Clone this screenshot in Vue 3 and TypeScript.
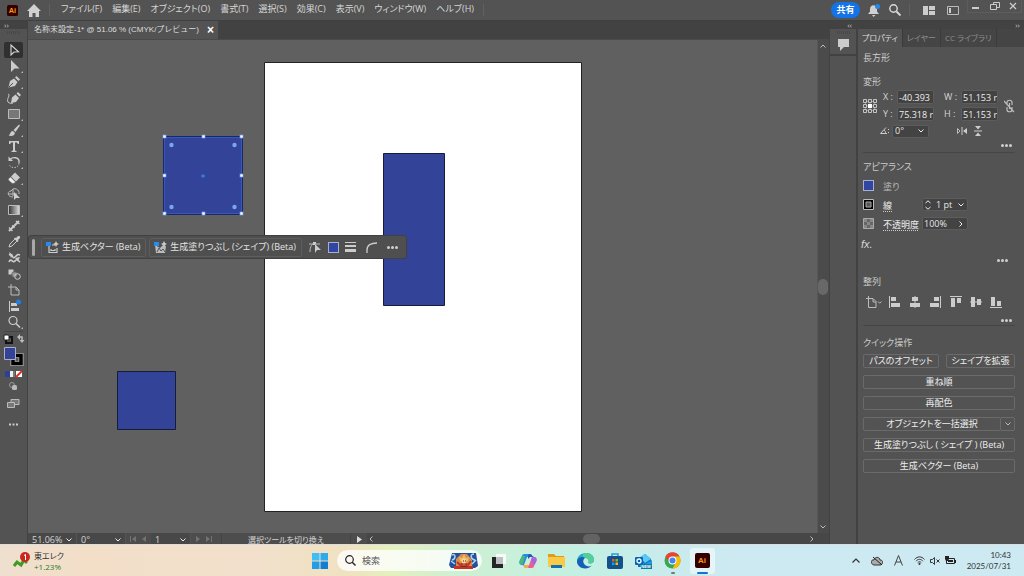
<script setup lang="ts">
import { ref } from 'vue'

interface Tool { name: string; art: string; more?: boolean }

const menus = ['ファイル(F)', '編集(E)', 'オブジェクト(O)', '書式(T)', '選択(S)', '効果(C)', '表示(V)', 'ウィンドウ(W)', 'ヘルプ(H)']

const tools: Tool[] = [
  { name: '選択ツール', art: '<path d="M4 2v10l3-3 4.500-.2z" fill="none" stroke="#d8d8d8" stroke-width="1.100"/>' },
  { name: 'ダイレクト選択ツール', more: true, art: '<path d="M4 1v12l3.500-3.500h5z"/>' },
  { name: 'ペンツール', more: true, art: '<path d="M1.500 12.500l1.500-6.500L7 3.500 10.500 7 8 11zM8 2.500l1.500-1.500L13 4.500 11.500 6z"/><path d="M2 12L6 8" stroke="#535353"/>' },
  { name: '曲線ツール', art: '<path d="M4 12L5 6.500 8.500 3.500l3.500 3.500-3 4zM9.500 2.500L11 1l3 3-1.500 1.500z"/><path d="M1 3c3 1-2 5 0 8 1 1.500 4 1.500 5 1" fill="none" stroke="#ccc"/>' },
  { name: '長方形ツール', more: true, art: '<path d="M1.500 2.500h11v9h-11z" fill="#777" stroke="#bbb"/>' },
  { name: 'ブラシツール', more: true, art: '<path d="M6.500 7L12 1.500l1 1L8.500 9zM6 8l2 2c-.5 2.500-3 3.500-6.500 2.500C3.500 11.500 3 8 6 8z"/>' },
  { name: '文字ツール', more: true, art: '<path d="M2 2h10v3h-1.200L10 3.500H8v8l1.500.5v1h-5v-1l1.500-.5v-8H4L3.200 5H2z"/>' },
  { name: '回転ツール', more: true, art: '<path d="M3 5c2-4 10-3 9 3" fill="none" stroke="#ccc" stroke-width="1.300"/><path d="M12 8c0 6-9 6-10 1" fill="none" stroke="#bbb" stroke-dasharray="1.500 1.300"/><path d="M1.500 1.500V6H6z"/>' },
  { name: '消しゴムツール', more: true, art: '<path d="M8 1.500L13 6.500 9 10.500 4 5.500z"/><path d="M3.500 6L8.500 11 7 12.300H5L1.500 9V8z" fill="#eee" stroke="#777" stroke-width=".5"/>' },
  { name: 'シェイプ形成ツール', art: '<path d="M6 10C0 10 0 4 4 4c3-5 9-1 8 3M1 7h9M6 2v7" fill="none" stroke="#bbb"/><path d="M7 5v8l2-2h4z"/>' },
  { name: 'グラデーションツール', more: true, art: '<defs><linearGradient id="toolGrad"><stop stop-color="#333"/><stop offset="1" stop-color="#ddd"/></linearGradient></defs><path d="M1.500 2.500h11v9h-11z" fill="url(#toolGrad)" stroke="#bbb"/>' },
  { name: 'ものさしツール', art: '<path d="M2 12L12 2" stroke="#ccc" stroke-width="2"/><path d="M2 8.500L5.500 12M5 6.500l2.500 2.500M9 2l3.500 3" stroke="#ccc" stroke-width="1.300"/>' },
  { name: 'スポイトツール', art: '<path d="M8 4L3 9l-1 3 3-1 5-5" fill="none" stroke="#ccc"/><path d="M7 3.500l1-1 1 .5 2-2c2-.5 2.500 1 2 2l-2 2 .5 1-1 1z"/>' },
  { name: 'パペットワープツール', art: '<path d="M2 4c4-2 3 5 6 2s3-3 5-2M2 11c2-5 4 2 6-1s3 0 5 1" fill="none" stroke="#ccc" stroke-width="1.600"/><path d="M2 1l4 3-2 3zM8 7l5-1-2 4z"/>' },
  { name: 'ブレンドツール', art: '<path d="M1.500 2.500h5v5h-5z"/><rect x="5" y="5" width="5" height="5" rx="1.500" fill="#999" stroke="#666"/><circle cx="10.500" cy="9.500" r="2.800" fill="none" stroke="#ccc"/>' },
  { name: 'アートボードツール', art: '<path d="M1 4h8l3 3v5H4V1M9 4v3h3" fill="none" stroke="#bbb"/>' },
  { name: 'モックアップツール', art: '<path d="M2 2h1v11H2zM4 4h6v3H4zM4 9h8v3H4z"/><circle cx="11.500" cy="3" r="2.500" fill="#1d7fe0"/>' },
  { name: 'ズームツール', more: true, art: '<circle cx="6" cy="5.500" r="4" fill="none" stroke="#ccc" stroke-width="1.200"/><path d="M9 8.500l4 4" stroke="#ccc" stroke-width="1.600"/>' },
]

const alignments: Tool[] = [
  { name: '水平方向左に整列', art: '<path d="M1 1h1v12H1zM3 2h5v4H3zM3 8h9v4H3z"/>' },
  { name: '水平方向中央に整列', art: '<path d="M6.500 1h1v12h-1zM4 2h6v4H4zM2 8h10v4H2z"/>' },
  { name: '水平方向右に整列', art: '<path d="M12 1h1v12h-1zM6 2h5v4H6zM2 8h9v4H2z"/>' },
  { name: '垂直方向上に整列', art: '<path d="M1 1h12v1H1zM2 3h4v9H2zM8 3h4v5H8z"/>' },
  { name: '垂直方向中央に整列', art: '<path d="M1 6.500h12v1H1zM2 2h4v10H2zM8 4h4v6H8z"/>' },
  { name: '垂直方向下に整列', art: '<path d="M1 12h12v1H1zM2 2h4v9H2zM8 6h4v5H8z"/>' },
]

const handles = [
  [136, 96], [175, 96], [213, 96],
  [136, 135], [213, 135],
  [136, 173], [175, 173], [213, 173],
]
const corners = [[143, 105], [206, 105], [143, 167], [206, 167]]

const quick = ['生成塗りつぶし ( シェイプ ) (Beta)', '生成ベクター (Beta)']

const x = ref('-40.393')
const y = ref('75.318 r')
const w = ref('51.153 r')
const h = ref('51.153 r')
const opacity = ref('100%')
</script>

<template>
  <div class="screen">
    <header class="menubar">
      <svg class="ai" viewBox="0 0 12 12"><rect width="12" height="12" rx="2" fill="#330000" /><text x="6" y="9" text-anchor="middle" class="ai-text">Ai</text></svg>
      <button class="plain home" aria-label="ホーム"><svg width="14" height="13" viewBox="0 0 14 13"><path d="M7 0L0 7h2v6h3.500V9h3v4H12V7h2z" fill="#d0d0d0" /></svg></button>
      <i class="vsep"></i>
      <nav class="menus"><button v-for="m in menus" :key="m" class="plain">{{ m }}</button></nav>
      <i class="vsep tail"></i>
      <span class="grow"></span>
      <button class="share">共有</button>
      <button class="plain" aria-label="通知"><svg width="12" height="13" viewBox="0 0 12 13"><path d="M0 10l2-2.500V5c0-5 7-5 7 0v2.500L11 10zM4 11h3.500L5.500 13z" fill="#d0d0d0" /><circle cx="9.500" cy="2.500" r="2.500" fill="#2289ee" /></svg></button>
      <button class="plain search-top" aria-label="検索"><svg width="12" height="12" viewBox="0 0 12 12"><circle cx="4.500" cy="4.500" r="3.700" fill="none" stroke="#ddd" stroke-width="1.400" /><path d="M7.500 7.500l4 4" stroke="#ddd" stroke-width="1.800" /></svg></button>
      <i class="vsep"></i>
      <button class="plain arrange" aria-label="ドキュメントレイアウト"><svg width="12" height="9" viewBox="0 0 12 9"><path d="M0 0h5v9H0zM6 0h6v4H6zM6 5h6v4H6z" fill="#ccc" /></svg></button>
      <button class="plain" aria-label="ワークスペース"><svg width="12" height="9" viewBox="0 0 12 9"><path d="M.5.5h11v8H.5z" fill="none" stroke="#bbb" /><path d="M2 2h2v5H2z" fill="#ccc" /></svg></button>
      <div class="wincontrols">
        <button class="plain" aria-label="最小化"><svg width="8" height="10" viewBox="0 0 8 10"><path d="M0 6h7v2H0z" fill="#ccc" /></svg></button>
        <button class="plain" aria-label="元に戻す"><svg width="10" height="10" viewBox="0 0 10 10"><path d="M3.500 3V1.500h6v5H7M.5 3.500h6v5h-6z" fill="none" stroke="#ccc" /></svg></button>
        <button class="plain" aria-label="閉じる"><svg width="8" height="10" viewBox="0 0 8 10"><path d="M1 2l6 6M7 2L1 8" stroke="#ccc" stroke-width="1.300" /></svg></button>
      </div>
    </header>

    <main class="workspace">
      <aside class="toolbar">
        <div class="dockhead left">››</div>
        <div class="grip"></div>
        <button v-for="(t, i) in tools" :key="t.name" class="plain tool" :class="{ active: i === 0 }" :aria-label="t.name">
          <svg width="14" height="14" viewBox="0 0 14 14" fill="#ccc" v-html="t.art"></svg>
          <i v-if="t.more" class="corner"></i>
        </button>
        <svg class="colors" width="27" height="100" viewBox="0 330 27 100" fill="none">
          <path d="M4 331.500h19" stroke="#454545" />
          <path d="M6 337h6v6H6z" stroke="#111" stroke-width="2" /><path d="M4 335h5v5H4z" fill="#fff" stroke="#222" />
          <path d="M18 337h4v4" stroke="#bbb" stroke-width="1.500" /><path d="M17 337l3-3v6zM19.500 340h5l-2.500 3z" fill="#bbb" />
          <path d="M13 355.500h8v8h-8z" stroke="#b5b5b5" stroke-width="5" /><path d="M13 355.500h8v8h-8z" stroke="#000" stroke-width="3.500" />
          <path d="M4.500 347.500h11v12h-11z" fill="#324398" stroke="#a9afc9" />
          <path d="M5 371h5v6H5z" fill="#2b3f9e" /><path d="M10 371h3v6h-3z" fill="#eee" /><path d="M13 371h2v6h-2z" fill="#777" /><path d="M16 371h6v6h-6z" fill="#fff" /><path d="M16 377l6-6" stroke="#e32b20" stroke-width="1.800" />
          <circle cx="12" cy="385" r="2.500" stroke="#999" /><rect x="12" y="385" width="5" height="5" rx="1.500" fill="#bbb" />
          <path d="M11 399.500h8v5h-8z" fill="#777" stroke="#bbb" /><path d="M7.500 402.500h7v5h-7z" fill="#777" stroke="#bbb" />
          <path d="M9 424.500h9" stroke="#ccc" stroke-width="2" stroke-dasharray="2 1.500" />
        </svg>
      </aside>

      <section class="document">
        <div class="tabs"><div class="tab"><span>名称未設定-1* @ 51.06 % (CMYK/プレビュー)</span><button class="plain" aria-label="タブを閉じる">×</button></div></div>
        <div class="stage">
          <div class="canvas">
            <svg class="art" fill="#324398">
              <path d="M236.500 22.500h317v449h-317z" fill="#fff" stroke="#222" />
              <path d="M355.500 113.500h61v152h-61z" stroke="#171c3a" />
              <path d="M89.500 331.500h58v58h-58z" stroke="#171c3a" />
              <path d="M136 97h78v77h-78z" stroke="#1c2864" stroke-width="2" />
              <path d="M136.500 97.500h77v76h-77z" fill="none" stroke="#3458be" />
              <rect v-for="(p, i) in handles" :key="i" :x="p[0] - 1" :y="p[1] - 1" width="3" height="3" fill="#fff" stroke="#6f9cf2" stroke-width=".7" />
              <circle v-for="(c, i) in corners" :key="'c' + i" :cx="c[0] + .500" :cy="c[1]" r="2.200" fill="#7ba4f2" />
              <circle cx="175" cy="136" r="1.800" fill="#3c78e0" />
            </svg>
            <div class="context">
              <i class="handle"></i>
              <button class="gen"><svg width="13" height="13" viewBox="0 0 13 13"><path d="M3 5v6.500h8V7M6 4h3M5 8v1.500h4V8" fill="none" stroke="#ccc" stroke-width="1.200" /><path d="M0 1h5v4H0z" fill="#268bed" /><path d="M10 0l1 2 2 1-2 1-1 2-1-2-2-1 2-1z" fill="#ccc" /></svg>生成ベクター (Beta)</button>
              <button class="gen"><svg width="13" height="13" viewBox="0 0 13 13"><path d="M1 4l5 3 3-3 3 1-1 7H2z" fill="#bbb" /><path d="M3 11l2-4 2 3 2-2 2 3" stroke="#555" fill="none" /><path d="M0 1h5v4H0z" fill="#268bed" /><path d="M10 0l1 2 2 1-2 1-1 2-1-2-2-1 2-1z" fill="#ccc" /></svg>生成塗りつぶし (シェイプ) (Beta)</button>
              <button class="plain" aria-label="パスを選択"><svg width="14" height="14" viewBox="0 0 14 14"><path d="M1 4h11M2 12c0-6 2-8 5-9" stroke="#bbb" fill="none" /><path d="M5 2h3v3H5zM7 4v9l2-3h4z" fill="#ccc" /></svg></button>
              <button class="swatch" aria-label="塗り"></button>
              <button class="plain" aria-label="線"><svg width="12" height="12" viewBox="0 0 12 12"><path d="M0 1h11v1H0zM0 4h11v2H0zM0 8h11v3H0z" fill="#ccc" /></svg></button>
              <button class="plain" aria-label="角の丸み"><svg width="12" height="12" viewBox="0 0 12 12"><path d="M1 12V9c0-5 4-7 10-7" fill="none" stroke="#ccc" stroke-width="1.300" /></svg></button>
              <button class="plain dots" aria-label="その他"><i></i><i></i><i></i></button>
            </div>
          </div>
          <div class="vscroll"><svg width="6" height="4" viewBox="0 0 6 4"><path d="M.5 3.500L3 1l2.500 2.500" class="line" /></svg><i></i><svg width="6" height="4" viewBox="0 0 6 4"><path d="M.5.5L3 3 5.500.5" class="line" /></svg></div>
        </div>
        <div class="status">
          <label class="drop zoomsel"><select aria-label="ズーム"><option>51.06%</option></select><svg width="6" height="4" viewBox="0 0 6 4"><path d="M.5.5L3 3 5.500.5" class="line bright" /></svg></label>
          <label class="drop rotsel"><select aria-label="回転"><option>0°</option></select><svg width="6" height="4" viewBox="0 0 6 4"><path d="M.5.5L3 3 5.500.5" class="line bright" /></svg></label>
          <button class="plain nav" aria-label="前のアートボード"><svg width="18" height="7" viewBox="0 0 18 7" fill="#737373"><path d="M0 0h1v6H0zM6 0v6L2 3zM16 0v6l-4-3z" /></svg></button>
          <label class="drop pagesel"><select aria-label="アートボード"><option>1</option></select><svg width="6" height="4" viewBox="0 0 6 4"><path d="M.5.5L3 3 5.500.5" class="line bright" /></svg></label>
          <button class="plain nav" aria-label="次のアートボード"><svg width="18" height="7" viewBox="0 0 18 7" fill="#737373"><path d="M1 0l4 3-4 3zM11 0l4 3-4 3zM16 0h1v6h-1z" /></svg></button>
          <span class="hint">選択ツールを切り換え</span>
          <button class="plain play" aria-label="表示メニュー"><svg width="5" height="7" viewBox="0 0 5 7"><path d="M0 0l5 3.500L0 7z" fill="#ddd" /></svg></button>
          <div class="hscroll"><svg width="4" height="6" viewBox="0 0 4 6"><path d="M3.500.5L1 3l2.500 2.500" class="line" /></svg><i></i><svg width="4" height="6" viewBox="0 0 4 6"><path d="M.5.5L3 3 .5 5.500" class="line" /></svg></div>
        </div>
      </section>

      <aside class="dock">
        <div class="dockhead">‹‹</div>
        <div class="docktile"><div class="grip"></div><button class="plain" aria-label="コメント"><svg width="13" height="12" viewBox="0 0 13 12"><path d="M1 0h11v8H7l-4 4V8H1z" fill="#ccc" /></svg></button></div>
      </aside>

      <aside class="props">
        <div class="dockhead">››</div>
        <div class="ptabs"><button class="on">プロパティ</button><button>レイヤー</button><button>CC ライブラリ</button></div>
        <section class="block transform">
          <h2>長方形</h2>
          <h2 class="second">変形</h2>
          <div class="xy">
            <svg class="ref" width="14" height="14" viewBox="0 0 14 14" fill="none"><path d="M2.500 2.500h9v9h-9zM7 2v10M2 7h10" stroke="#888" /><path d="M.5.5h3v3h-3zM5.500.5h3v3h-3zM10.500.5h3v3h-3zM.5 5.500h3v3h-3zM10.500 5.500h3v3h-3zM.5 10.500h3v3h-3zM5.500 10.500h3v3h-3zM10.500 10.500h3v3h-3z" fill="#555" stroke="#c5c5c5" /><path d="M5 5h4v4H5z" fill="#fff" /></svg>
            <div class="fields">
              <label>X :<input v-model="x" /></label><label>W :<input v-model="w" /></label>
              <label>Y :<input v-model="y" /></label><label>H :<input v-model="h" /></label>
            </div>
            <button class="plain" aria-label="縦横比を固定"><svg width="11" height="14" viewBox="0 0 11 14" fill="none" stroke="#bbb"><path d="M3 6V3.500c0-3 5-3 5 0V6M3 8v2.500c0 3 5 3 5 0V8M5.500 4v6M0 2l10 11" stroke-width="1.200" /></svg></button>
          </div>
          <div class="angle">
            <svg width="9" height="8" viewBox="0 0 9 8"><path d="M6 .5L.5 6.500H7M4 3c1.500 1 1.500 2 1.500 3.500" fill="none" stroke="#ccc" /><path d="M8 2h1v1H8zM8 5h1v1H8z" fill="#ccc" /></svg>
            <label class="drop box anglesel"><select aria-label="角度"><option>0°</option></select><svg width="6" height="4" viewBox="0 0 6 4"><path d="M.5.5L3 3 5.500.5" class="line bright" /></svg></label>
            <button class="plain flip" aria-label="水平方向に反転"><svg width="10" height="8" viewBox="0 0 10 8"><path d="M.5 1.500v5L3 4z" fill="none" stroke="#bbb" /><path d="M4.500 0h1v8h-1zM10 1v6L6 4z" fill="#ccc" /></svg></button>
            <button class="plain" aria-label="垂直方向に反転"><svg width="8" height="10" viewBox="0 0 8 10"><path d="M1 0h6L4 3.500zM0 4.500h8v1H0zM1 10h6L4 6.500z" fill="#ccc" /></svg></button>
          </div>
          <button class="plain dots" aria-label="変形のその他"><i></i><i></i><i></i></button>
        </section>

        <section class="block appearance">
          <h2>アピアランス</h2>
          <div class="row"><button class="swatch" aria-label="塗り"></button><span class="name dim">塗り</span></div>
          <div class="row">
            <svg width="11" height="11" viewBox="0 0 11 11"><path d="M.5.5h10v10H.5z" stroke="#bbb" /><path d="M3 3h5v5H3z" fill="#555" stroke="#aaa" /></svg>
            <button class="plain name under">線</button>
            <div class="box stroke"><svg width="6" height="10" viewBox="0 0 6 10"><path d="M.5 3L3 .8 5.500 3M.5 7L3 9.200 5.500 7" class="line bright" /></svg><label class="drop"><select aria-label="線幅"><option>1 pt</option></select><svg width="6" height="4" viewBox="0 0 6 4"><path d="M.5.5L3 3 5.500.5" class="line bright" /></svg></label></div>
          </div>
          <div class="row">
            <svg width="11" height="11" viewBox="0 0 11 11"><path d="M.5.5h10v10H.5z" fill="#666" stroke="#aaa" /><path d="M1 1h3v3H1zM7 1h3v3H7zM4 4h3v3H4zM1 7h3v3H1zM7 7h3v3H7z" fill="#888" /></svg>
            <button class="plain name under">不透明度</button>
            <div class="box opacity"><input v-model="opacity" aria-label="不透明度" /><button class="plain" aria-label="不透明度を調整"><svg width="4" height="6" viewBox="0 0 4 6"><path d="M.5.5L3 3 .5 5.500" class="line bright" /></svg></button></div>
          </div>
          <button class="plain fx" aria-label="効果を選択">fx.</button>
          <button class="plain dots" aria-label="アピアランスのその他"><i></i><i></i><i></i></button>
          <h2 class="align-title">整列</h2>
          <div class="align">
            <button class="plain" aria-label="整列の基準"><svg width="16" height="12" viewBox="0 0 16 12" fill="none" stroke="#bbb"><path d="M0 2.500h7l3 3v6H2.500V0M7 3v3h3M12 5.500l1.700 1.700L15.500 5.500" /></svg></button>
            <button v-for="a in alignments" :key="a.name" class="plain" :aria-label="a.name"><svg width="14" height="14" viewBox="0 0 14 14" fill="#ccc" v-html="a.art"></svg></button>
          </div>
          <button class="plain dots low" aria-label="整列のその他"><i></i><i></i><i></i></button>
        </section>

        <section class="block quick">
          <h2>クイック操作</h2>
          <div class="pair"><button class="action">パスのオフセット</button><button class="action">シェイプを拡張</button></div>
          <button class="action">重ね順</button>
          <button class="action">再配色</button>
          <div class="split"><button class="action">オブジェクトを一括選択</button><button class="action" aria-label="一括選択のオプション"><svg width="6" height="4" viewBox="0 0 6 4"><path d="M.5.5L3 3 5.500.5" class="line" /></svg></button></div>
          <button v-for="q in quick" :key="q" class="action">{{ q }}</button>
        </section>
      </aside>
    </main>

    <footer class="taskbar">
      <button class="plain widget">
        <svg width="18" height="18" viewBox="0 0 18 18"><path d="M1 14l3-4 4 3 3-5 3 3" fill="none" stroke="#3f9a27" stroke-width="3" /><circle cx="12" cy="5" r="5" fill="#c9281d" /><path d="M11 3.500l1.500-1V8" fill="none" stroke="#fff" /></svg>
        <span class="stock"><span>東エレク</span><span class="up">+1.23%</span></span>
      </button>
      <div class="center">
        <button class="plain app" aria-label="スタート"><svg width="16" height="16" viewBox="0 0 16 16"><path d="M0 0h7.500v7.500H0z" fill="#40bdf3" /><path d="M8.500 0H16v7.500H8.500z" fill="#2ea9ec" /><path d="M0 8.500h7.500V16H0z" fill="#229de6" /><path d="M8.500 8.500H16V16H8.500z" fill="#127fd7" /></svg></button>
        <label class="search">
          <svg width="11" height="11" viewBox="0 0 11 11" fill="none" stroke="#222"><circle cx="4.500" cy="4.500" r="3.800" stroke-width="1.200" /><path d="M7.200 7.200l3.300 3.300" stroke-width="1.400" /></svg>
          <input placeholder="検索" aria-label="検索" />
          <svg width="29" height="17" viewBox="0 0 29 17"><path d="M3 1h24l2 13-3 2H2l-2-3z" fill="#27509b" /><path d="M3 3c4-2 4 4 0 5M25 2c-4 0-4 5 1 6M2 9l4 3M27 8l-4 4" stroke="#a9d7f1" stroke-width="1.500" fill="none" /><path d="M7 17V7l5-5h6l5 6v9z" fill="#d98c4b" /><path d="M10 5l3 1 2-4 2 4 3-1-1 4h-8z" fill="#e6be6b" /><path d="M5 14h19v3H5z" fill="#c93322" /><path d="M8 10l3 3 4-2 4 2 3-4" fill="none" stroke="#b83a25" stroke-width="2" /><circle cx="15" cy="9" r="2.500" fill="#ffd29b" /><path d="M12 14h6M14 9h1M16 9h1" stroke="#4b2630" /></svg>
        </label>
        <button class="plain app" aria-label="タスクビュー"><svg width="16" height="16" viewBox="0 0 16 16"><path d="M5 1h10v10H5z" fill="#f8faf9" /><path d="M1 4h4v7h7v4H1z" fill="#262626" /><path d="M5 4h7v7H5z" fill="#bdc0c0" /></svg></button>
        <button class="plain app" aria-label="Copilot"><svg width="18" height="16" viewBox="0 0 18 16"><path d="M5 1h6c2 0 2 3 4 3H8L5 12H3C0 12 0 9 1 7l2-4c0-1 1-2 2-2z" fill="#278de0" /><path d="M1 7l2-4h3L4 11H2C0 11 0 9 1 7z" fill="#49b979" /><path d="M13 15H7c-2 0-2-3-4-3h7l3-8h2c3 0 3 3 2 5l-2 4c0 1-1 2-2 2z" fill="#e76199" /><path d="M3 12h7l-1 3H7c-2 0-2-3-4-3z" fill="#f3ae4b" /><path d="M11 1c2 0 2 3 4 3h-4L9 6V2z" fill="#324fbd" /><path d="M13 4h2c3 0 3 3 2 5l-2 3-3-5z" fill="#a466da" /></svg></button>
        <button class="plain app" aria-label="エクスプローラー"><svg width="17" height="15" viewBox="0 0 17 15"><path d="M0 1h6l2 2h8v4H0z" fill="#dd9c20" /><path d="M0 4h17v10H0z" fill="#f8ca48" /><path d="M3 12h11v3H3z" fill="#136fb1" /></svg></button>
        <button class="plain app" aria-label="Edge"><svg width="17" height="16" viewBox="0 0 17 16"><path d="M0 8C0-2 17-3 17 7c0 3-3 4-6 3 2-2 0-5-3-5-5 0-7 5-5 8C1 12 0 10 0 8z" fill="#26a9d1" /><path d="M6 1c5-3 11 1 11 6 0 3-3 4-6 3 2-3-1-6-5-5z" fill="#54cf98" /><path d="M0 8c1-4 6-5 8-3-3 2-2 7 2 8 2 1 4 0 5-1-4 6-15 4-15-4z" fill="#1561b5" /></svg></button>
        <button class="plain app" aria-label="Microsoft Store"><svg width="16" height="16" viewBox="0 0 16 16"><path d="M5 4V1h6v3" fill="none" stroke="#249ddb" stroke-width="1.500" /><rect y="3" width="16" height="13" rx="2" fill="#14508b" /><path d="M5 6h2.500v2.500H5z" fill="#f35325" /><path d="M8.500 6H11v2.500H8.500z" fill="#81bc06" /><path d="M5 9.500h2.500V12H5z" fill="#05a6f0" /><path d="M8.500 9.500H11V12H8.500z" fill="#ffba08" /></svg></button>
        <button class="plain app" aria-label="Outlook"><svg width="18" height="16" viewBox="0 0 18 16"><path d="M3 6l7-5 6 5v8H3z" fill="#116db9" /><path d="M5 4l5-3 6 5-6 4z" fill="#59c9f5" /><path d="M5 8l5 3 7-4v7H5z" fill="#199ddf" /><rect y="4" width="8" height="8" rx="1" fill="#0865b5" /><circle cx="4" cy="8" r="2" fill="none" stroke="#fff" stroke-width="1.300" /><path d="M6 11h11v5H6z" fill="#087ca7" /><text x="11" y="15" text-anchor="middle" class="new">NEW</text></svg></button>
        <button class="plain app chrome" aria-label="Chrome"><svg width="17" height="17" viewBox="0 0 17 17"><circle cx="8.500" cy="8.500" r="8" fill="#34a853" /><path d="M1.500 4.500A8 8 0 0 1 15.500 4.500H8.500L5 10z" fill="#ea4335" /><path d="M15.500 4.500a8 8 0 0 1-7 12L12 10 9 4.500z" fill="#fbbc05" /><circle cx="8.500" cy="8.500" r="4" fill="#fff" /><circle cx="8.500" cy="8.500" r="3" fill="#4285f4" /></svg><i class="running"></i></button>
        <button class="plain app current" aria-label="Illustrator"><svg width="15" height="15" viewBox="0 0 15 15"><rect width="15" height="15" rx="2" fill="#330000" /><text x="7" y="10" text-anchor="middle" class="ai-text">Ai</text></svg><i class="running wide"></i></button>
      </div>
      <div class="tray">
        <button class="plain" aria-label="隠れているインジケーター"><svg width="8" height="5" viewBox="0 0 8 5"><path d="M.5 4.500L4 1l3.500 3.500" fill="none" stroke="#333" stroke-width="1.200" /></svg></button>
        <svg width="12" height="10" viewBox="0 0 12 10" fill="none"><path d="M3 9C-1 8 0 3 3 4c1-4 6-3 6 0 4 0 3 5 0 5z" fill="#aaa" stroke="#333" /><path d="M2 1l9 8" stroke="#222" /></svg>
        <svg width="9" height="11" viewBox="0 0 9 11" fill="none" stroke="#444"><path d="M.5 10.500L4.500.5l4 10M2 7h5" /></svg>
        <div class="net">
          <svg width="11" height="9" viewBox="0 0 11 9" fill="none" stroke="#333"><path d="M.5 3.500c3-3.500 7-3.500 10 0M2 5.200c2-2.500 5-2.500 7 0M3.700 6.700c1-1.200 2.600-1.200 3.600 0" /><circle cx="5.500" cy="8" r=".7" fill="#333" /></svg>
          <svg width="10" height="8" viewBox="0 0 10 8" fill="none" stroke="#333"><path d="M.5 2.500h2l2-2v7l-2-2h-2zM6.500 2.500l3 3M9.500 2.500l-3 3" /></svg>
          <svg width="11" height="9" viewBox="0 0 11 9"><path d="M1.500 2.500h8v5h-8z" fill="none" stroke="#222" /><path d="M3 4h5v2H3zM10 4h1v3h-1zM0 0h4v3l-1 2H1L0 3z" fill="#222" /></svg>
        </div>
        <div class="clock"><span>10:43</span><span>2025/07/31</span></div>
      </div>
    </footer>
  </div>
</template>

<style>
html, body { background: #535353; overflow: hidden; }
</style>

<style scoped>
.screen { display: flex; flex-direction: column; height: 100vh; color: #d6d6d6; font: 9px/12px "Open Sans", "Noto Sans CJK JP", sans-serif; font-feature-settings: "palt"; }
.screen * { box-sizing: border-box; }
button, input, select { font: inherit; color: inherit; font-feature-settings: inherit; padding: 0; margin: 0; border: 0; background: none; border-radius: 0; outline: none; min-width: 0; }
select { appearance: none; }
svg { flex: none; display: block; }
.plain { display: flex; align-items: center; white-space: nowrap; }
.grow { flex: 1; }
.line { fill: none; stroke: #bdbdbd; stroke-width: 1px; }
.bright { stroke: #eee; }
.ai-text { fill: #ff9a00; font: bold 8px "Liberation Sans", sans-serif; }
.new { fill: #fff; font: bold 4px "Liberation Sans", sans-serif; }

.menubar { display: flex; align-items: center; height: 20px; flex: none; background: #535353; padding-left: 7px; }
.ai { width: 11px; height: 11px; }
.home { margin-left: 9px; }
.vsep { width: 1px; height: 12px; background: #606060; }
.home + .vsep { margin-left: 8px; }
.menus { display: flex; gap: 10px; margin-left: 11px; padding-bottom: 3px; }
.tail { margin-left: 9px; }
.share { width: 29px; height: 16px; border-radius: 8px; background: #1473e6; color: #fff; font-weight: bold; margin-right: 8px; }
.search-top { margin: 0 8px 0 9px; }
.arrange { margin: 0 12px 0 13px; }
.wincontrols { display: flex; align-items: center; justify-content: space-between; align-self: flex-start; height: 13px; width: 55px; margin: 0 2px 0 8px; padding: 0 4px; border: 1px solid #5d5d5d; border-top: 0; }

.workspace { display: flex; flex: 1; min-height: 0; background: #424242; border-top: 1px solid #3c4244; }
.toolbar { width: 27px; flex: none; background: #535353; display: flex; flex-direction: column; align-items: center; }
.dockhead { height: 8px; line-height: 7px; width: 100%; background: #424242; color: #ccc; font-size: 8px; padding-right: 4px; text-align: right; flex: none; }
.left { text-align: left; padding-left: 4px; }
.grip { width: 13px; height: 3px; margin: 2px auto 8px; background: repeating-linear-gradient(90deg, #484848 0 1px, #535353 1px 2px); flex: none; }
.tool { width: 19px; height: 16px; justify-content: center; position: relative; flex: none; }
.active { background: #303030; border-radius: 2px; }
.corner { position: absolute; right: 0; bottom: 1px; border: 1px solid #bbb; border-top-color: transparent; border-left-color: transparent; }

.document { flex: 1; min-width: 0; display: flex; flex-direction: column; margin: 0 1px; }
.tabs { height: 19px; flex: none; background: #424242; border-bottom: 1px solid #4a4a4a; display: flex; }
.tab { display: flex; align-items: center; gap: 8px; padding: 0 4px 0 6px; background: #535353; font: 8px/18px "Liberation Sans", "Noto Sans CJK JP", sans-serif; color: #ddd; white-space: nowrap; }
.tab button { font-size: 12px; color: #fff; font-weight: bold; }
.stage { flex: 1; display: flex; min-height: 0; }
.canvas { position: relative; flex: 1; background: #606060; overflow: hidden; }
.art { width: 100%; height: 100%; }
.vscroll { width: 12px; background: #4b4b4b; border-left: 1px solid #575757; display: flex; flex-direction: column; align-items: center; justify-content: space-between; padding: 4px 1px 4px 0; }
.vscroll i { width: 10px; height: 16px; border-radius: 5px; background: #686868; }
.context { position: absolute; left: 0; top: 195px; height: 24px; display: flex; align-items: center; padding: 0 8px 0 3px; background: #4f4f4f; border: 1px solid #414141; border-radius: 3px; gap: 6px; }
.handle { width: 3px; height: 17px; border-radius: 2px; background: #a8a8a8; }
.gen { display: flex; align-items: center; gap: 3px; height: 19px; padding: 0 5px 0 4px; border: 1px solid #5d5d5d; border-radius: 2px; white-space: nowrap; color: #e4e4e4; }
.gen + .gen { margin-left: -3px; }
.context .plain + .plain { margin-left: 3px; }
.swatch { width: 11px; height: 11px; background: #3145a2; border: 1px solid #a8b0cf; flex: none; }
.dots { gap: 1px; height: 4px; }
.dots i { width: 3px; height: 3px; border-radius: 2px; background: #cfcfcf; }

.status { display: flex; align-items: center; flex: none; height: 11px; background: #4d4d4d; overflow: hidden; }
.status > * { height: 11px; padding-top: 2px; }
.drop { display: flex; align-items: center; }
.drop select { flex: 1; width: 0; height: 12px; }
.status .drop { background: #484848; border-right: 1px solid #555; padding-right: 4px; padding-left: 4px; }
.zoomsel { width: 49px; }
.rotsel { width: 49px; }
.nav { width: 25px; justify-content: center; }
.pagesel { width: 40px; }
.hint { width: 129px; text-align: center; font-size: 8px; border-left: 1px solid #444; margin-left: 5px; line-height: 9px; }
.play { width: 17px; justify-content: center; border-left: 1px solid #444; }
.hscroll { flex: 1; display: flex; align-items: center; justify-content: space-between; background: #474747; padding: 0 15px 0 2px; }
.status .hscroll { padding-top: 0; }
.hscroll i { width: 17px; height: 10px; border-radius: 5px; background: #636363; }

.dock { width: 26px; flex: none; background: #535353; }
.docktile { height: 27px; border-bottom: 2px solid #424242; display: flex; flex-direction: column; align-items: center; }
.docktile .grip { margin-bottom: 5px; }
.props { width: 168px; flex: none; border-left: 2px solid #424242; background: #535353; }
.ptabs { display: flex; height: 18px; background: #454545; font-size: 8px; }
.ptabs button { padding: 0 4px; color: #8d8d8d; border-right: 1px solid #3b3b3b; white-space: nowrap; }
.ptabs .on { background: #535353; color: #ddd; }
h2 { margin: 0; font: inherit; color: #ccc; }
.block { margin: 0 9px 0 5px; display: flex; flex-direction: column; }
.transform { height: 106px; padding-top: 5px; border-bottom: 1px solid #464646; }
.second { margin-top: 12px; }
.xy { display: flex; align-items: center; justify-content: space-between; margin-top: 2px; }
.fields { display: grid; grid-template-columns: 51px 54px; gap: 3px 10px; }
.fields label { display: flex; align-items: center; justify-content: space-between; }
.fields input { width: 37px; height: 14px; padding-left: 1px; background: #424242; border: 1px solid #5c5c5c; border-radius: 2px; color: #eee; }
.angle { display: flex; align-items: center; height: 14px; margin-top: 3px; padding-left: 17px; }
.box { background: #434343; border: 1px solid #5c5c5c; border-radius: 2px; height: 13px; color: #e6e6e6; }
.anglesel { width: 37px; margin-left: 3px; padding: 0 4px 0 2px; }
.flip { margin: 0 7px 0 28px; }
.transform .dots { align-self: flex-end; margin: 5px 3px 0 0; }
.appearance { height: 173px; padding-top: 8px; border-bottom: 1px solid #464646; }
.row { display: flex; align-items: center; height: 19px; }
h2 + .row { margin-top: 3px; }
.name { width: 40px; margin-left: 9px; padding-top: 3px; }
.dim { color: #bbb; }
.under { text-decoration: underline dotted #ccc; text-underline-offset: 2px; color: #f0f0f0; }
.stroke { display: flex; align-items: center; width: 46px; padding: 0 3px 0 2px; gap: 5px; }
.stroke .drop { flex: 1; }
.opacity { display: flex; align-items: center; width: 46px; padding: 0 4px 0 1px; }
.opacity input { flex: 1; width: 0; }
.row .box { margin-left: -1px; }
.fx { font: italic 11px/14px "Liberation Sans", sans-serif; align-self: flex-start; margin: 4px 0 0 -2px; }
.appearance .dots { align-self: flex-end; margin: 7px 7px 0 0; }
.align-title { margin-top: 14px; }
.align { display: flex; align-items: center; justify-content: space-between; height: 16px; margin: 6px 12px 0 3px; }
.appearance .low { margin: 8px 3px 0 0; }
.quick { padding-top: 11px; gap: 7px; }
.quick h2 { margin-bottom: -2px; }
.action { height: 14px; line-height: 12px; border: 1px solid #6a6a6a; border-radius: 2px; color: #eee; white-space: nowrap; text-align: center; }
.pair { display: flex; justify-content: space-between; }
.pair .action { width: 76px; }
.pair .action:last-child { width: 69px; }
.split { display: flex; }
.split .action:first-child { flex: 1; }
.split .action:last-child { width: 15px; display: flex; align-items: center; justify-content: center; margin-left: -1px; }

.taskbar { height: 32px; flex: none; display: grid; grid-template-columns: 1fr auto 1fr; align-items: center; color: #333; border-top: 1px solid #ddd; background: linear-gradient(90deg, #efdfcf 0%, #f3dfc8 8%, #f2e0cc 25%, #efe2c0 34%, #e5f0bd 38%, #cff0d1 44%, #c3f0e3 57%, #c9ebec 65%, #cdeaf2 72%); }
.widget { margin-left: 13px; gap: 3px; text-align: left; }
.stock { display: flex; flex-direction: column; line-height: 11px; font-size: 8px; color: #333; }
.up { color: #28792b; }
.center { display: flex; align-items: center; padding-right: 4px; }
.app { position: relative; width: 29px; height: 26px; justify-content: center; }
.search { display: flex; align-items: center; width: 145px; height: 21px; border-radius: 11px; background: #ffffffc8; padding: 0 4px 0 8px; margin: 0 2px 0 3px; }
.search input { flex: 1; width: 0; margin-left: 6px; color: #555; }
.search input::placeholder { color: #555; opacity: 1; }
.current { width: 25px; margin-left: 3px; background: #ffffff80; border-radius: 3px; }
.running { position: absolute; bottom: 0; width: 4px; height: 2px; border-radius: 1px; background: #777; }
.wide { width: 11px; background: #1573ce; }
.tray { display: flex; align-items: center; justify-content: flex-end; gap: 11px; padding-right: 13px; }
.net { display: flex; align-items: center; gap: 5px; }
.clock { display: flex; flex-direction: column; text-align: right; line-height: 11px; font-family: Lato, sans-serif; font-size: 8px; }
</style>
